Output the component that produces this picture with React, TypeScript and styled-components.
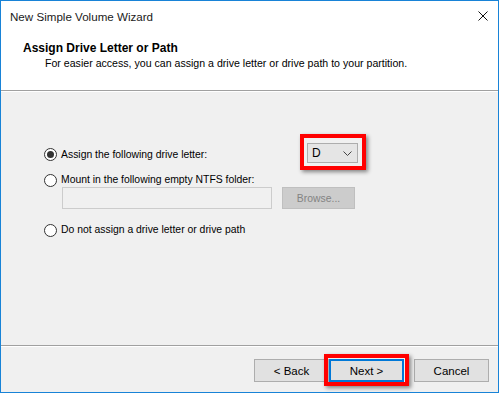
import styled, { createGlobalStyle } from "styled-components";

const GlobalStyle = createGlobalStyle`
  html, body {
    margin: 0;
    padding: 0;
    background: #ffffff;
  }
  * {
    box-sizing: border-box;
  }
`;

export default function App() {
  return (
    <>
      <GlobalStyle />
      <Window>
        <TitleBar>
          <TitleText>New Simple Volume Wizard</TitleText>
          <CloseIcon viewBox="0 0 10 10" aria-label="Close">
            <path d="M0.5 0.5 L9.5 9.5 M9.5 0.5 L0.5 9.5" />
          </CloseIcon>
        </TitleBar>
        <Header>
          <Heading>Assign Drive Letter or Path</Heading>
          <SubHeading>
            For easier access, you can assign a drive letter or drive path to your partition.
          </SubHeading>
        </Header>
        <Divider />
        <Content>
          <LetterRow>
            <OptionLabel>
              <RadioMark $checked />
              Assign the following drive letter:
            </OptionLabel>
            <Highlight>
              <Combo>
                <ComboValue>D</ComboValue>
                <Chevron viewBox="0 0 9 5">
                  <path d="M0.5 0.5 L4.5 4.5 L8.5 0.5" />
                </Chevron>
              </Combo>
            </Highlight>
          </LetterRow>
          <FolderRow>
            <OptionLabel>
              <RadioMark />
              Mount in the following empty NTFS folder:
            </OptionLabel>
          </FolderRow>
          <FieldRow>
            <PathField />
            <DisabledButton>Browse...</DisabledButton>
          </FieldRow>
          <NoneRow>
            <OptionLabel>
              <RadioMark />
              Do not assign a drive letter or drive path
            </OptionLabel>
          </NoneRow>
        </Content>
        <Divider />
        <Footer>
          <Button>&lt; Back</Button>
          <Highlight $tight>
            <Button $primary>Next &gt;</Button>
          </Highlight>
          <CancelButton>Cancel</CancelButton>
        </Footer>
      </Window>
    </>
  );
}

const Window = styled.div`
  width: 499px;
  height: 393px;
  border: 1px solid #1883d7;
  background: #f0f0f0;
  display: flex;
  flex-direction: column;
  font-family: "Liberation Sans", Arial, sans-serif;
  font-size: 10.4px;
  color: #000;
`;

const TitleBar = styled.div`
  height: 30px;
  flex: none;
  background: #fff;
  display: flex;
  align-items: center;
  justify-content: space-between;
  padding: 0 10px 0 9px;
`;

const TitleText = styled.span`
  font-size: 11.6px;
  color: #1a1a1a;
`;

const CloseIcon = styled.svg`
  width: 10px;
  height: 10px;
  fill: none;
  stroke: #111;
  stroke-width: 1;
  margin-top: -1px;
`;

const Header = styled.div`
  height: 59px;
  flex: none;
  background: #fff;
  padding: 10px 0 0 22px;
`;

const Heading = styled.div`
  font-weight: bold;
  font-size: 12px;
  line-height: 14px;
`;

const SubHeading = styled.div`
  font-size: 10.6px;
  line-height: 14px;
  padding: 1px 0 0 22px;
`;

const Divider = styled.div`
  flex: none;
  height: 2px;
  border-top: 1px solid #a0a0a0;
  border-bottom: 1px solid #fff;
`;

const Content = styled.div`
  flex: 1;
  padding: 51px 0 0 43px;
  display: flex;
  flex-direction: column;
`;

const LetterRow = styled.div`
  width: 314px;
  display: flex;
  align-items: center;
  justify-content: space-between;
`;

const FolderRow = styled.div`
  margin-top: 7px;
`;

const NoneRow = styled.div`
  margin-top: 11px;
`;

const OptionLabel = styled.label`
  display: flex;
  align-items: center;
  gap: 4px;
  height: 14px;
  line-height: 14px;
  margin-top: 3px;
`;

const RadioMark = styled.span<{ $checked?: boolean }>`
  width: 13px;
  height: 13px;
  border-radius: 50%;
  border: 1px solid #333;
  background: #fff;
  display: flex;
  align-items: center;
  justify-content: center;
  flex: none;

  &::after {
    content: "";
    width: 7px;
    height: 7px;
    border-radius: 50%;
    background: #333;
    display: ${(p) => (p.$checked ? "block" : "none")};
  }
`;

const Highlight = styled.div<{ $tight?: boolean }>`
  position: relative;
  display: flex;

  &::after {
    content: "";
    position: absolute;
    inset: ${(p) => (p.$tight ? "-5px -5px -4px -5px" : "-9px -8px -7px -7px")};
    border: 4px solid #ff0000;
    box-shadow: 2px 2px 4px rgba(0, 0, 0, 0.45);
    pointer-events: none;
  }
`;

const Combo = styled.div`
  width: 51px;
  height: 20px;
  border: 1px solid #adadad;
  background: #e5e5e5;
  display: flex;
  align-items: center;
  justify-content: space-between;
  padding: 0 5px 0 4px;
`;

const ComboValue = styled.span`
  font-size: 12px;
  line-height: 18px;
`;

const Chevron = styled.svg`
  width: 9px;
  height: 5px;
  fill: none;
  stroke: #444;
  stroke-width: 1;
`;

const FieldRow = styled.div`
  display: flex;
  gap: 10px;
  margin: 0 0 0 18px;
`;

const PathField = styled.div`
  width: 210px;
  height: 22px;
  border: 1px solid #cccccc;
  background: #f0f0f0;
`;

const DisabledButton = styled.div`
  width: 73px;
  height: 22px;
  border: 1px solid #bfbfbf;
  background: #cccccc;
  color: #838383;
  display: flex;
  align-items: center;
  justify-content: center;
`;

const Footer = styled.div`
  flex: none;
  height: 45px;
  display: flex;
  justify-content: flex-end;
  align-items: flex-start;
  padding: 12px 9px 0 0;
`;

const Button = styled.div<{ $primary?: boolean }>`
  width: 75px;
  height: 23px;
  border: ${(p) => (p.$primary ? "2px solid #0078d7" : "1px solid #adadad")};
  background: #e1e1e1;
  display: flex;
  align-items: center;
  justify-content: center;
  font-size: 11.5px;
`;

const CancelButton = styled(Button)`
  margin-left: 10px;
`;
